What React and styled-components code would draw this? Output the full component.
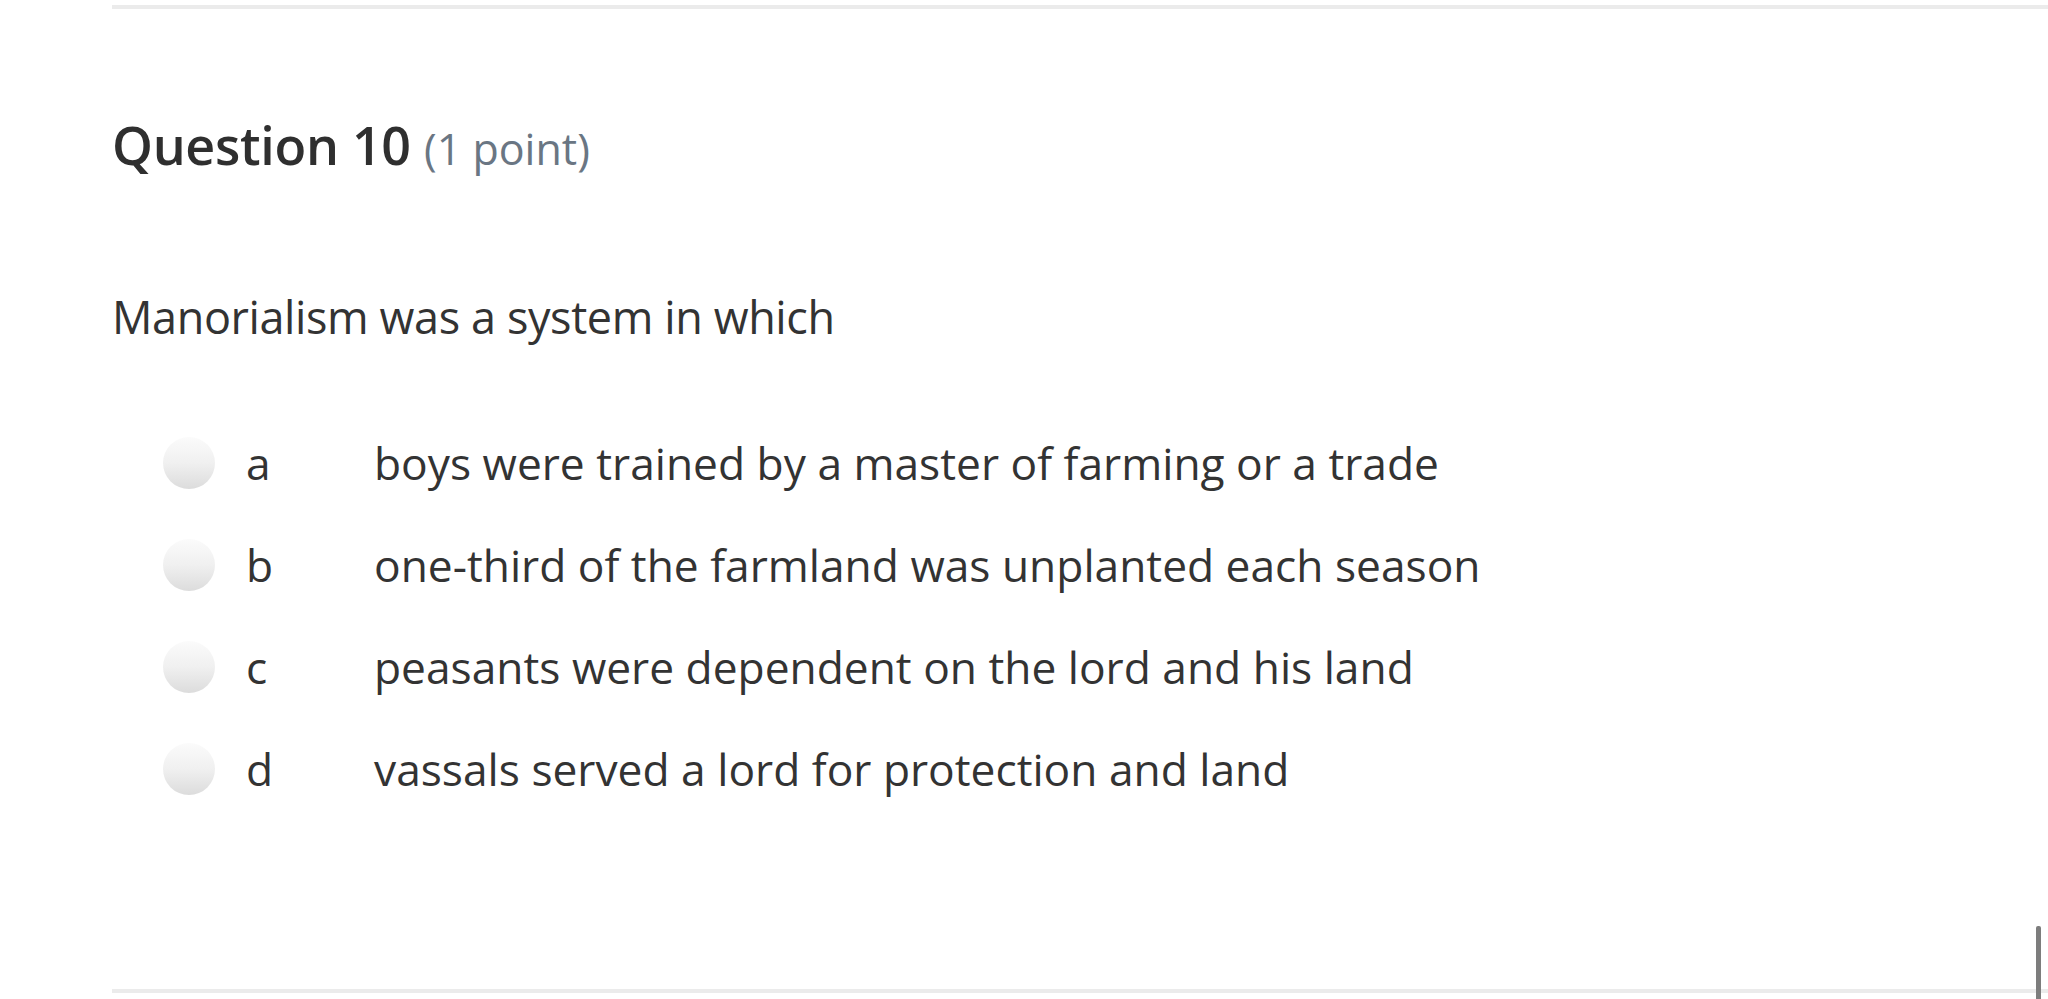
import React from 'react';
import styled, { createGlobalStyle } from 'styled-components';

const GlobalStyle = createGlobalStyle`
  html, body {
    margin: 0;
    padding: 0;
    background: #fff;
    overflow: hidden;
  }
  body {
    font-family: "Open Sans", "Liberation Sans", sans-serif;
    color: #333;
  }
`;

const Page = styled.div`
  position: relative;
  height: 999px;
  padding-left: 112px;
  box-sizing: border-box;
`;

const Rule = styled.div`
  height: 4px;
  background: #ebebeb;
  margin-top: ${p => p.top}px;
`;

const Heading = styled.h2`
  margin: 100px 0 0;
  font-size: 52px;
  line-height: 72px;
  font-weight: 600;
  color: #2f2f2f;
  letter-spacing: -0.3px;
`;

const Points = styled.span`
  font-size: 43px;
  font-weight: 400;
  color: #6a7683;
  letter-spacing: 0;
`;

const Prompt = styled.p`
  margin: 102px 0 0;
  font-size: 45px;
  line-height: 60px;
  color: #333;
  letter-spacing: -0.4px;
`;

const Options = styled.div`
  margin-top: 86px;
  display: flex;
  flex-direction: column;
  gap: 50px;
`;

const Option = styled.label`
  display: grid;
  grid-template-columns: 52px 159px 1fr;
  align-items: center;
  padding-left: 51px;
  height: 52px;
  font-size: 44.3px;
  color: #333;
`;

const Radio = styled.span`
  width: 52px;
  height: 52px;
  border-radius: 50%;
  background: linear-gradient(to bottom, #fbfbfb 0%, #f0f0f0 50%, #dcdcdc 100%);
`;

const Letter = styled.span`
  padding-left: 31px;
`;

const Text = styled.span`
  white-space: nowrap;
`;

const Scrollbar = styled.div`
  position: absolute;
  right: 7px;
  top: 921px;
  width: 5px;
  bottom: 0;
  background: #7d7d7d;
  border-radius: 2px 2px 0 0;
`;

const options = [
  ['a', 'boys were trained by a master of farming or a trade'],
  ['b', 'one-third of the farmland was unplanted each season'],
  ['c', 'peasants were dependent on the lord and his land'],
  ['d', 'vassals served a lord for protection and land'],
];

export default function App() {
  return (
    <Page>
      <GlobalStyle />
      <Rule top={5} />
      <Heading>
        Question 10 <Points>(1 point)</Points>
      </Heading>
      <Prompt>Manorialism was a system in which</Prompt>
      <Options>
        {options.map(([k, t]) => (
          <Option key={k}>
            <Radio />
            <Letter>{k}</Letter>
            <Text>{t}</Text>
          </Option>
        ))}
      </Options>
      <Rule top={198} />
      <Scrollbar />
    </Page>
  );
}
